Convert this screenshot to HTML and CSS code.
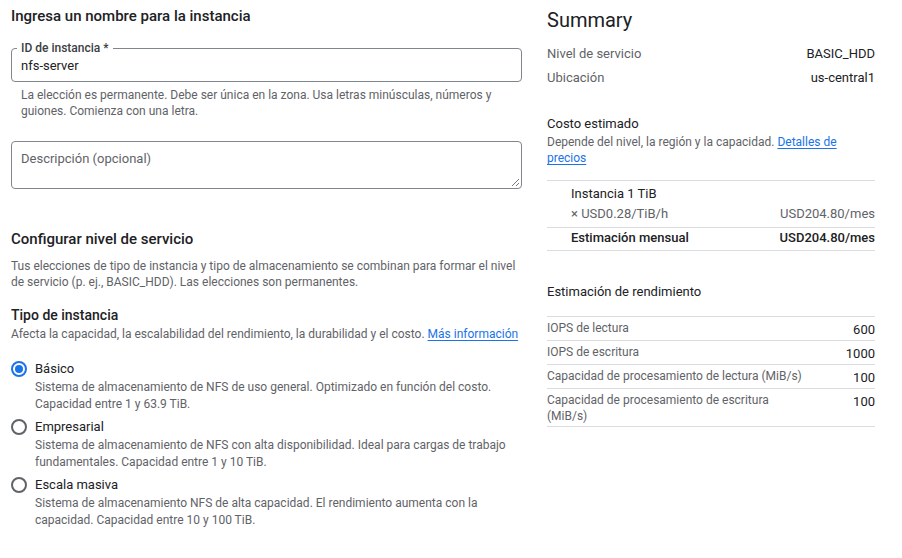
FILE: index.html
```html
<!DOCTYPE html>
<html lang="es">
<head>
<meta charset="utf-8">
<link rel="stylesheet" href="styles.css">
</head>
<body>
<div class="page">
  <main class="form">
    <h2 class="h-section first">Ingresa un nombre para la instancia</h2>
    <fieldset class="field">
      <legend class="field-label">ID de instancia *</legend>
      <div class="field-value">nfs-server</div>
    </fieldset>
    <p class="help">La elección es permanente. Debe ser única en la zona. Usa letras minúsculas, números y guiones. Comienza con una letra.</p>
    <div class="textarea">
      <span class="placeholder">Descripción (opcional)</span>
      <svg class="grip" width="9" height="9" viewBox="0 0 9 9"><path d="M8 1L1 8M8 5L5 8" stroke="#777" stroke-width="1"/></svg>
    </div>

    <h2 class="h-section second">Configurar nivel de servicio</h2>
    <p class="desc">Tus elecciones de tipo de instancia y tipo de almacenamiento se combinan para formar el nivel de servicio (p. ej., BASIC_HDD). Las elecciones son permanentes.</p>

    <h3 class="h-sub">Tipo de instancia</h3>
    <p class="desc tight">Afecta la capacidad, la escalabilidad del rendimiento, la durabilidad y el costo. <a class="link">Más información</a></p>

    <div class="radios">
      <div class="radio">
        <span class="dot checked"></span>
        <div class="radio-text">
          <div class="radio-label">Básico</div>
          <div class="radio-desc">Sistema de almacenamiento de NFS de uso general. Optimizado en función del costo. Capacidad entre 1 y 63.9 TiB.</div>
        </div>
      </div>
      <div class="radio">
        <span class="dot"></span>
        <div class="radio-text">
          <div class="radio-label">Empresarial</div>
          <div class="radio-desc">Sistema de almacenamiento de NFS con alta disponibilidad. Ideal para cargas de trabajo fundamentales. Capacidad entre 1 y 10 TiB.</div>
        </div>
      </div>
      <div class="radio">
        <span class="dot"></span>
        <div class="radio-text">
          <div class="radio-label">Escala masiva</div>
          <div class="radio-desc">Sistema de almacenamiento NFS de alta capacidad. El rendimiento aumenta con la capacidad. Capacidad entre 10 y 100 TiB.</div>
        </div>
      </div>
    </div>
  </main>

  <aside class="summary">
    <h1 class="sum-title">Summary</h1>
    <div class="kvs">
      <div class="kv"><span class="k">Nivel de servicio</span><span class="v">BASIC_HDD</span></div>
      <div class="kv"><span class="k">Ubicación</span><span class="v">us-central1</span></div>
    </div>

    <div class="cost-title">Costo estimado</div>
    <p class="cost-desc">Depende del nivel, la región y la capacidad. <a class="link">Detalles de precios</a></p>

    <div class="cost-table">
      <div class="cost-item">
        <div class="ci-name">Instancia 1 TiB</div>
        <div class="ci-row"><span>× USD0.28/TiB/h</span><span>USD204.80/mes</span></div>
      </div>
      <div class="cost-total"><span>Estimación mensual</span><span>USD204.80/mes</span></div>
    </div>

    <div class="perf-title">Estimación de rendimiento</div>
    <div class="perf">
      <div class="perf-row"><span class="pk">IOPS de lectura</span><span class="pv">600</span></div>
      <div class="perf-row"><span class="pk">IOPS de escritura</span><span class="pv">1000</span></div>
      <div class="perf-row"><span class="pk">Capacidad de procesamiento de lectura (MiB/s)</span><span class="pv">100</span></div>
      <div class="perf-row"><span class="pk">Capacidad de procesamiento de escritura (MiB/s)</span><span class="pv">100</span></div>
    </div>
  </aside>
</div>
</body>
</html>
```

FILE: styles.css
```css
* { box-sizing: border-box; }
html, body { margin: 0; padding: 0; background: #fff; }
body {
  font-family: Roboto, "Liberation Sans", Arial, sans-serif;
  color: #202124;
  width: 902px;
  height: 558px;
  overflow: hidden;
}
p { margin: 0; }
.page {
  display: flex;
  padding-left: 11px;
}
.form {
  width: 511px;
  flex: none;
}
.summary {
  width: 328px;
  margin-left: 25px;
  flex: none;
}
.h-section {
  font-size: 15px;
  font-weight: 500;
  line-height: 20px;
  margin: 0;
}
.h-section.first { margin-top: 6px; }
.h-section.second { margin-top: 40px; }

.field {
  margin: 16px 0 0 0;
  padding: 0 9px 6px 9px;
  border: 1px solid #80868b;
  border-radius: 4px;
  height: 40px;
}
.field-label {
  font-size: 12px;
  font-weight: 500;
  color: #3c4043;
  padding: 0 4px;
  margin-left: -4px;
  line-height: 12px;
}
.field-value {
  font-size: 13px;
  line-height: 18px;
  color: #202124;
  margin-top: 3px;
}
.help {
  font-size: 12px;
  line-height: 16px;
  color: #5f6368;
  padding: 0 10px;
  margin-top: 5px;
}
.textarea {
  margin-top: 22px;
  height: 48px;
  border: 1px solid #80868b;
  border-radius: 4px;
  padding: 6px 9px;
  position: relative;
}
.placeholder {
  font-size: 13px;
  line-height: 16px;
  color: #5f6368;
}
.grip {
  position: absolute;
  right: 1px;
  bottom: 1px;
}
.desc {
  font-size: 12px;
  line-height: 16px;
  color: #5f6368;
  margin-top: 9px;
}
.desc.tight { margin-top: 2px; }
.h-sub {
  font-size: 14px;
  font-weight: 500;
  line-height: 18px;
  margin: 16px 0 0 0;
}
.link {
  color: #1a73e8;
  text-decoration: underline;
  text-underline-offset: 2px;
}
.radios {
  margin-top: 18px;
  display: flex;
  flex-direction: column;
  gap: 5px;
}
.radio {
  display: flex;
  align-items: flex-start;
}
.dot {
  width: 16px;
  height: 16px;
  border: 2px solid #5f6368;
  border-radius: 50%;
  margin: 1px 8px 0 0;
  flex: none;
  position: relative;
}
.dot.checked { border-color: #1a73e8; }
.dot.checked::after {
  content: "";
  position: absolute;
  left: 2px; top: 2px;
  width: 8px; height: 8px;
  border-radius: 50%;
  background: #1a73e8;
}
.radio-label {
  font-size: 13px;
  line-height: 17px;
  color: #202124;
}
.radio-desc {
  font-size: 12px;
  line-height: 17px;
  color: #5f6368;
  margin-top: 2px;
}

.sum-title {
  font-size: 20px;
  font-weight: 400;
  line-height: 26px;
  margin: 7px 0 0 0;
}
.kvs { margin-top: 9px; }
.kv {
  display: flex;
  justify-content: space-between;
  font-size: 13px;
  line-height: 24px;
}
.k { color: #5f6368; }
.v { color: #202124; }
.cost-title {
  font-size: 13px;
  line-height: 18px;
  margin-top: 25px;
}
.cost-desc {
  font-size: 12px;
  line-height: 16px;
  color: #5f6368;
  margin-top: 1px;
  width: 300px;
}
.cost-table {
  margin-top: 14px;
  border-top: 1px solid #dadce0;
}
.cost-item {
  padding: 3px 0 3px 24px;
  border-bottom: 1px solid #dadce0;
  font-size: 13px;
  line-height: 20px;
}
.ci-row {
  display: flex;
  justify-content: space-between;
  color: #5f6368;
}
.cost-total {
  display: flex;
  justify-content: space-between;
  padding: 0 0 2px 24px;
  font-size: 13px;
  line-height: 20px;
  font-weight: 500;
  border-bottom: 1px solid #dadce0;
}
.perf-title {
  font-size: 13px;
  line-height: 18px;
  margin-top: 32px;
}
.perf {
  margin-top: 15px;
  border-top: 1px solid #dadce0;
}
.perf-row {
  display: flex;
  justify-content: space-between;
  align-items: flex-start;
  border-bottom: 1px solid #dadce0;
  padding: 3px 0 0 0;
}
.pk {
  font-size: 12px;
  line-height: 16px;
  color: #5f6368;
  max-width: 260px;
}
.pv {
  font-size: 13px;
  line-height: 20px;
  color: #202124;
}
.perf-row:last-child { padding-bottom: 2px; }
```
